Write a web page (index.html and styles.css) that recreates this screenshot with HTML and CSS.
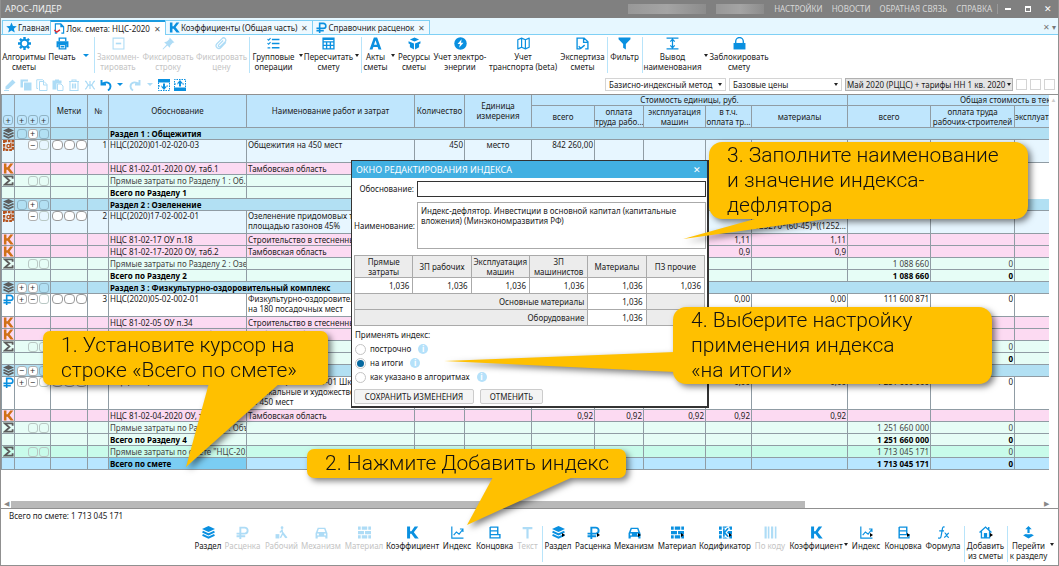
FILE: index.html
```
<!DOCTYPE html>
<html lang="ru">
<head>
<meta charset="utf-8">
<title>АРОС-ЛИДЕР</title>
<link rel="stylesheet" href="styles.css">
</head>
<body>
<svg class="defs" aria-hidden="true">
  <symbol id="star" viewBox="0 0 24 24"><path fill="currentColor" d="M12 1l3.200 7.600 8.200.7-6.200 5.400 1.900 8.100L12 18.500l-7.100 4.300 1.900-8.100L.6 9.300l8.200-.7z"/></symbol>
  <symbol id="doc" viewBox="0 0 24 24"><path fill="none" stroke="currentColor" stroke-width="2.500" d="M7 22H3V2h12l6 6v14h-5M15 2v6h6"/><path fill="none" stroke="#e0262c" stroke-width="3" d="M1 15l5 5 7-5"/></symbol>
  <symbol id="kk" viewBox="0 0 24 24"><path fill="currentColor" d="M2 1h5.500v8.500H10L16 1h6.500l-8 10.500 9 11.500h-7L10 14.500H7.500V23H2z"/></symbol>
  <symbol id="rub" viewBox="0 0 24 24"><path fill="none" stroke="currentColor" stroke-width="3.500" d="M8 24V3h8a5.500 5.500 0 0 1 0 11H1M1 19h16"/></symbol>
  <symbol id="gear" viewBox="0 0 24 24"><circle cx="12" cy="12" r="6.800" fill="none" stroke="currentColor" stroke-width="3.600"/><path stroke="currentColor" stroke-width="4.500" d="M12 0v4M12 20v4M0 12h4M20 12h4M3.600 3.600l2.800 2.800M17.600 17.600l2.800 2.800M20.400 3.600l-2.800 2.800M6.400 17.600l-2.800 2.800"/></symbol>
  <symbol id="print" viewBox="0 0 24 24"><path fill="none" stroke="currentColor" stroke-width="2.500" d="M6 8V2h12v6M6 14h12v8H6zM8.500 18h7"/><path fill="currentColor" d="M1 8h22v11h-4v-6H5v6H1z"/></symbol>
  <symbol id="minusbox" viewBox="0 0 24 24"><path fill="none" stroke="currentColor" stroke-width="2" d="M2 2h20v20H2z"/><path stroke="currentColor" stroke-width="3" d="M7 12h10"/></symbol>
  <symbol id="pin" viewBox="0 0 24 24"><path fill="currentColor" d="M14 1l9 9-3 .500-4.500 4.500-1 5-4.500-4.500L2 23l-1-1 7.500-8L4 9.500l5-1L13.500 4z"/></symbol>
  <symbol id="clip" viewBox="0 0 24 24"><path fill="none" stroke="currentColor" stroke-width="2.300" d="M20 10l-9 9.500a5 5 0 0 1-7.500-7L13 3a4 4 0 0 1 6 5.500l-9 9a2 2 0 0 1-3-3L15 6.500"/></symbol>
  <symbol id="list" viewBox="0 0 24 24"><path fill="none" stroke="currentColor" stroke-width="2.800" d="M9 4.500h14M9 12h14M9 20h14"/><path fill="none" stroke="currentColor" stroke-width="2" d="M1 4l2 2 3.500-4M1 11.500l2 2L6.500 9.500M1 20h5"/></symbol>
  <symbol id="calc" viewBox="0 0 24 24"><path fill="none" stroke="currentColor" stroke-width="2.500" d="M2 2h20v20H2zM2 9h20M2 15.500h20M8.500 9v13M15.500 9v13M2 4.500h20"/></symbol>
  <symbol id="aa" viewBox="0 0 24 24"><path fill="currentColor" fill-rule="evenodd" d="M9 1h6l8 22h-5.500l-1.500-4.500H8L6.500 23H1zM12 6l-2.700 8.500h5.400z"/></symbol>
  <symbol id="boxes" viewBox="0 0 24 24"><path fill="currentColor" d="M12 1l8.500 3.500L12 8.500 3.500 4.500zM1 8l10 4v11L3.500 19v-6L1 12zM23 8l-10 4v11l7.500-4v-6L23 12z"/></symbol>
  <symbol id="bolt" viewBox="0 0 24 24"><circle cx="12" cy="12" r="11.500" fill="currentColor"/><path fill="#fff" d="M14 4l-7.500 9H11l-1.500 7 8-9.500H13z"/></symbol>
  <symbol id="map" viewBox="0 0 24 24"><path fill="none" stroke="currentColor" stroke-width="2.200" stroke-linejoin="round" d="M1.500 5l7-3 7 3 7-3v17l-7 3-7-3-7 3zM8.500 2v17M15.500 5v17"/></symbol>
  <symbol id="exam" viewBox="0 0 24 24"><path fill="none" stroke="currentColor" stroke-width="2.500" d="M8 22H2V2h13l7 7v13h-5M14 2v8h8M5 17l4 4 7-6"/></symbol>
  <symbol id="funnel" viewBox="0 0 24 24"><path fill="currentColor" d="M1 1h22v3l-8.500 9v10l-5-3v-7L1 4z"/></symbol>
  <symbol id="height" viewBox="0 0 24 24"><path fill="none" stroke="currentColor" stroke-width="2.300" d="M1 2h22M1 22h22M12 4v16M8 8.500L12 4l4 4.500M8 15.500l4 4.500 4-4.500"/></symbol>
  <symbol id="lock" viewBox="0 0 24 24"><path fill="none" stroke="currentColor" stroke-width="2.500" d="M5 12V8a7 7 0 0 1 14 0v4"/><path fill="currentColor" d="M1 11h22v12H1z"/></symbol>
  <symbol id="pencil" viewBox="0 0 24 24"><path fill="currentColor" d="M17 1l6 6L9 20l-6 1 0-6zM0 22h10v2H0z"/></symbol>
  <symbol id="copyf" viewBox="0 0 24 24"><path fill="currentColor" d="M1 1h15v4H6v12H1z"/><path fill="currentColor" d="M8 7h15v16H8z"/></symbol>
  <symbol id="copy" viewBox="0 0 24 24"><path fill="none" stroke="currentColor" stroke-width="2" d="M4 19H1.500V1.500h12L16 4M7 5h9l6 6v12H7zM15 5v7h7"/></symbol>
  <symbol id="paste" viewBox="0 0 24 24"><path fill="currentColor" d="M1 3h5V1h8v2h5v6H9v12H1z"/><path fill="none" stroke="currentColor" stroke-width="2" d="M11 10h7l4 4v9H11z"/></symbol>
  <symbol id="trash" viewBox="0 0 24 24"><path fill="none" stroke="currentColor" stroke-width="2.200" d="M2 5h20M8 5V2h8v3M4 5v18h16V5M9 9v10M12 9v10M15 9v10"/></symbol>
  <symbol id="zhe" viewBox="0 0 24 24"><path fill="none" stroke="currentColor" stroke-width="2.500" d="M12 4v16M2 4c5 0 3 8 8 8h4c5 0 3-8 8-8M2 20c5 0 3-8 8-8h4c5 0 3 8 8 8"/></symbol>
  <symbol id="undo" viewBox="0 0 24 24"><path fill="none" stroke="currentColor" stroke-width="3.800" d="M3 2v9h9M4 10c8-6 17-3 17 5 0 3-2 6-5 8"/></symbol>
  <symbol id="gridd" viewBox="0 0 24 24"><path fill="currentColor" d="M0 0h24v7H0z"/><path fill="none" stroke="currentColor" stroke-width="2" stroke-dasharray="3 2" d="M1 7v16h22V7M1 14h6M17 14h6"/><path fill="currentColor" d="M10 9h4v6h4l-6 7-6-7h4z"/></symbol>
  <symbol id="gridu" viewBox="0 0 24 24"><path fill="currentColor" d="M0 17h24v7H0z"/><path fill="none" stroke="currentColor" stroke-width="2" stroke-dasharray="3 2" d="M1 17V1h22v16M1 10h6M17 10h6"/><path fill="currentColor" d="M10 15h4V9h4l-6-7-6 7h4z"/></symbol>
  <symbol id="layers" viewBox="0 0 24 24"><path fill="currentColor" d="M12 0l12 5.500L12 11 0 5.500z"/><path fill="none" stroke="currentColor" stroke-width="3.800" d="M1 10.500l11 5 11-5M1 16.500l11 5 11-5"/></symbol>
  <symbol id="worker" viewBox="0 0 24 24"><circle cx="13" cy="3" r="2.500" fill="currentColor"/><path fill="none" stroke="currentColor" stroke-width="2.500" d="M13 6l1 8-4 8M14 13l6 9M13 8l-4 4M12 9l10 13"/><path fill="currentColor" d="M1 15h7v8H1z"/></symbol>
  <symbol id="car" viewBox="0 0 24 24"><path fill="currentColor" fill-rule="evenodd" d="M5 3h14l3 8 1 2v10h-4v-3H5v3H1V13l1-2zM7 5.500L5 11h14l-2-5.500zM5.500 14a1.700 1.700 0 1 0 .1 0zM18.500 14a1.700 1.700 0 1 0 .1 0z"/></symbol>
  <symbol id="bricks" viewBox="0 0 24 24"><path fill="currentColor" d="M0 1h5v6H0zM7 1h10v6H7zM19 1h5v6h-5zM0 9h11v6H0zM13 9h11v6H13zM0 17h5v6H0zM7 17h10v6H7zM19 17h5v6h-5z"/></symbol>
  <symbol id="codif" viewBox="0 0 24 24"><use href="#bricks"/><path stroke="#fff" stroke-width="7" fill="none" d="M9 3v18M18 3l-8 9 8 9"/><path stroke="currentColor" stroke-width="3" fill="none" d="M9 4v16M17 4l-7 8 7 8"/></symbol>
  <symbol id="chart" viewBox="0 0 24 24"><path fill="none" stroke="currentColor" stroke-width="2.200" d="M1.500 1v21.500H23M5 17l5-6 5 4 7-9M16.500 5.500H22V11"/></symbol>
  <symbol id="ending" viewBox="0 0 24 24"><path fill="none" stroke="currentColor" stroke-width="2.600" d="M4 2h14v14M4 2v20h18v-6H4M4 9h14"/></symbol>
  <symbol id="tt" viewBox="0 0 24 24"><path fill="currentColor" d="M3 2h18v4h-7v17h-4V6H3z"/></symbol>
  <symbol id="bars" viewBox="0 0 24 24"><path fill="currentColor" d="M1 1h4v22H1zM7 1h3v22H7zM13 1h4v22h-4zM20 1h3v22h-3z"/></symbol>
  <symbol id="fx" viewBox="0 0 24 24"><path fill="none" stroke="currentColor" stroke-width="2.200" d="M14 2c-4-1.500-4 3-4.500 6L7.500 19c-.5 3-2 4-5.500 3M4 9h9M14 13c4-1 3 9 8 8M22 13c-3 0-5 8-9 8"/></symbol>
  <symbol id="house" viewBox="0 0 24 24"><path fill="none" stroke="currentColor" stroke-width="2.500" d="M1 12L12 2l11 10M4.500 10v12h15V10M18 2v5"/><path fill="currentColor" d="M9 13h6v9H9z"/></symbol>
  <symbol id="goto" viewBox="0 0 24 24"><path fill="currentColor" d="M12 0l6 6h-4v7h-4V6H6zM2 17l6-2.500V15h8v-.500L22 17l-10 6z"/></symbol>
  <symbol id="sigma" viewBox="0 0 24 24"><path fill="none" stroke="currentColor" stroke-width="4" d="M21 8V3H4l10 9-10 9h17v-5"/></symbol>
  <symbol id="norm" viewBox="0 0 24 24"><path fill="none" stroke="currentColor" stroke-width="5" stroke-dasharray="6 2" d="M2.500 2.500h19v19h-19z"/><circle cx="12" cy="13" r="3.500" fill="none" stroke="currentColor" stroke-width="3"/><path stroke="currentColor" stroke-width="3" d="M17 6v11"/></symbol>
</svg>

<div class="app">
  <header class="titlebar">
    <span class="brand">АРОС-ЛИДЕР</span>
    <span class="redacted"></span><span class="redacted short"></span>
    <nav class="menu"><a href="#">НАСТРОЙКИ</a><a href="#">НОВОСТИ</a><a href="#">ОБРАТНАЯ СВЯЗЬ</a><a href="#">СПРАВКА</a></nav>
    <button class="wbtn" aria-label="Свернуть"><i class="w-min"></i></button>
    <button class="wbtn" aria-label="Развернуть"><i class="w-max"></i></button>
    <button class="wbtn" aria-label="Закрыть">✕</button>
  </header>

  <nav class="tabs">
    <a class="tab" href="#"><svg class="ti"><use href="#star"/></svg>Главная</a>
    <a class="tab active" href="#"><svg class="ti"><use href="#doc"/></svg>Лок. смета: НЦС-2020<span class="x">✕</span></a>
    <a class="tab" href="#"><svg class="ti"><use href="#kk"/></svg>Коэффициенты (Общая часть)<span class="x">✕</span></a>
    <a class="tab" href="#"><svg class="ti"><use href="#rub"/></svg>Справочник расценок<span class="x">✕</span></a>
    <span class="tabs-end">✕ ▾</span>
  </nav>

  <div class="ribbon">
    <button class="tool"><svg><use href="#gear"/></svg>Алгоритмы<br>сметы</button>
    <button class="tool"><svg><use href="#print"/></svg>Печать</button>
    <button class="caret blue" aria-label="Варианты печати"></button>
    <button class="tool sep" disabled><svg><use href="#minusbox"/></svg>Закоммен-<br>тировать</button>
    <button class="tool" disabled><svg><use href="#pin"/></svg>Фиксировать<br>строку</button>
    <button class="tool" disabled><svg><use href="#clip"/></svg>Фиксировать<br>цену</button>
    <button class="tool sep"><svg><use href="#list"/></svg>Групповые<br>операции</button>
    <button class="caret" aria-label="Групповые операции: меню"></button>
    <button class="tool"><svg><use href="#calc"/></svg>Пересчитать<br>смету</button>
    <button class="caret" aria-label="Пересчитать: меню"></button>
    <button class="tool sep"><svg><use href="#aa"/></svg>Акты<br>сметы</button>
    <button class="caret" aria-label="Акты: меню"></button>
    <button class="tool"><svg><use href="#boxes"/></svg>Ресурсы<br>сметы</button>
    <button class="tool"><svg><use href="#bolt"/></svg>Учет электро-<br>энергии</button>
    <button class="tool"><svg><use href="#map"/></svg>Учет<br>транспорта (beta)</button>
    <button class="tool"><svg><use href="#exam"/></svg>Экспертиза<br>сметы</button>
    <button class="tool sep"><svg><use href="#funnel"/></svg>Фильтр</button>
    <button class="tool sep"><svg><use href="#height"/></svg>Вывод<br>наименования</button>
    <button class="caret" aria-label="Вывод: меню"></button>
    <button class="tool"><svg><use href="#lock"/></svg>Заблокировать<br>смету</button>
  </div>

  <div class="quick">
    <div class="qicons">
      <button disabled aria-label="Правка"><svg><use href="#pencil"/></svg></button>
      <button disabled aria-label="Копировать"><svg><use href="#copyf"/></svg></button>
      <button disabled aria-label="Дублировать"><svg><use href="#copy"/></svg></button>
      <button disabled aria-label="Вставить"><svg><use href="#paste"/></svg></button>
      <button disabled aria-label="Удалить"><svg><use href="#trash"/></svg></button>
      <button disabled aria-label="Ж"><svg><use href="#zhe"/></svg></button>
      <button aria-label="Отменить"><svg><use href="#undo"/></svg></button>
      <button class="caret blue" aria-label="История отмен"></button>
      <button disabled aria-label="Вернуть"><svg class="flip"><use href="#undo"/></svg></button>
      <button class="caret pale" aria-label="История возвратов"></button>
      <button aria-label="Развернуть"><svg><use href="#gridd"/></svg></button>
      <button aria-label="Свернуть"><svg><use href="#gridu"/></svg></button>
    </div>
    <div class="filters">
      <label class="sel"><select aria-label="Метод"><option>Базисно-индексный метод</option></select></label>
      <label class="sel"><select aria-label="Цены"><option>Базовые цены</option></select></label>
      <label class="sel grey"><select aria-label="Период"><option>Май 2020 (РЦЦС) + тарифы НН 1 кв. 2020</option></select></label>
      <button class="sq" aria-label="Опция 1"></button><button class="sq" aria-label="Опция 2"></button><button class="sq" aria-label="Опция 3"></button>
    </div>
  </div>

  <main class="gridarea">
    <div class="gridwrap">
    <table class="grid">
      <colgroup><col class="c-ico"><col class="c-box"><col class="c-mark"><col class="c-num"><col class="c-base"><col class="c-name"><col class="c-qty"><col class="c-unit"><col class="c-all"><col class="c-pay"><col class="c-mach"><col class="c-incl"><col class="c-mat"><col class="c-total"><col class="c-work"><col></colgroup>
      <thead>
        <tr class="g1"><th rowspan="2" class="low"><span class="bx"><button class="b">+</button></span></th><th rowspan="2" class="low"><span class="bx"><button class="b">+</button><button class="b">+</button><button class="b">+</button></span></th><th rowspan="2">Метки</th><th rowspan="2">№</th><th rowspan="2">Обоснование</th><th rowspan="2">Наименование работ и затрат</th><th rowspan="2">Количество</th><th rowspan="2">Единица<br>измерения</th><th colspan="5">Стоимость единицы, руб.</th><th colspan="3" class="cut">Общая стоимость в теку</th></tr>
        <tr class="g2"><th>всего</th><th>оплата<br>труда рабо...</th><th>эксплуатация<br>машин</th><th>в т.ч.<br>оплата тр...</th><th>материалы</th><th>всего</th><th>оплата труда<br>рабочих-строителей</th><th class="clip">эксплуата</th></tr>
      </thead>
      <tbody>
        <tr class="sec"><td><svg class="ri"><use href="#layers"/></svg><td><span class="bx"><i class="b e"></i><button class="b w">+</button><i class="b e"></i></span><td><td><td colspan="12">Раздел 1 : Общежития
        <tr class="nz h2"><td><svg class="ri br"><use href="#norm"/></svg><td><span class="bx"><i class="b n"></i><button class="b w">−</button><i class="b e"></i></span><td><span class="bx"><i class="b w r"></i><i class="b w r"></i><i class="b w r"></i></span><td class="r">1<td>НЦС(2020)01-02-020-03<td>Общежития на 450 мест<td class="r">450<td class="c">место<td class="r">842 260,00<td><td><td><td><td><td><td>
        <tr class="k"><td><svg class="ri or"><use href="#kk"/></svg><td><td><td><td>НЦС 81-02-01-2020 ОУ, таб.1<td>Тамбовская область<td><td><td><td><td><td><td><td><td>
        <tr class="s"><td><svg class="ri"><use href="#sigma"/></svg><td><span class="bx"><i class="b n"></i><i class="b e"></i><i class="b e"></i></span><td><td><td>Прямые затраты по Разделу 1 : Об...<td><td><td><td><td><td><td><td><td><td>
        <tr class="s t"><td><td><td><td><td>Всего по Разделу 1<td><td><td><td><td><td><td><td><td><td>
        <tr class="sec"><td><svg class="ri"><use href="#layers"/></svg><td><span class="bx"><i class="b e"></i><button class="b w">+</button><i class="b e"></i></span><td><td><td colspan="12">Раздел 2 : Озеленение
        <tr class="nz h2"><td><svg class="ri br"><use href="#norm"/></svg><td><span class="bx"><i class="b n"></i><button class="b w">−</button><i class="b e"></i></span><td><span class="bx"><i class="b w r"></i><i class="b w r"></i><i class="b w r"></i></span><td class="r">2<td>НЦС(2020)17-02-002-01<td>Озеленение придомовых тер<br>площадью газонов 45%<td><td><td><td><td><td><td class="r"><br>125270*(60-45)*((1252...<td class="r">1 088 660<td><td>
        <tr class="k"><td><svg class="ri or"><use href="#kk"/></svg><td><td><td><td>НЦС 81-02-17 ОУ п.18<td>Строительство в стесненных<td><td><td><td><td><td class="r">1,11<td class="r">1,11<td><td><td>
        <tr class="k"><td><svg class="ri or"><use href="#kk"/></svg><td><td><td><td>НЦС 81-02-17-2020 ОУ, таб.2<td>Тамбовская область<td><td><td><td><td><td class="r">0,9<td class="r">0,9<td><td><td>
        <tr class="s"><td><svg class="ri"><use href="#sigma"/></svg><td><span class="bx"><i class="b n"></i><i class="b e"></i><i class="b e"></i></span><td><td><td>Прямые затраты по Разделу 2 : Озе...<td><td><td><td><td><td><td><td><td class="r">1 088 660<td class="r">0<td>
        <tr class="s t"><td><td><td><td><td>Всего по Разделу 2<td><td><td><td><td><td><td><td><td class="r">1 088 660<td class="r">0<td>
        <tr class="sec"><td><svg class="ri"><use href="#layers"/></svg><td><span class="bx"><button class="b w">+</button><button class="b w">+</button><i class="b e"></i></span><td><td><td colspan="12">Раздел 3 : Физкультурно-оздоровительный комплекс
        <tr class="h2"><td><svg class="ri bl"><use href="#rub"/></svg><td><span class="bx"><button class="b w">+</button><button class="b w">−</button><i class="b e"></i></span><td><span class="bx"><i class="b w r"></i><i class="b w r"></i><i class="b w r"></i></span><td class="r">3<td>НЦС(2020)05-02-002-01<td>Физкультурно-оздоровитель<br>на 180 посадочных мест<td><td><td><td><td><td class="r">0,00<td class="r">0,00<td class="r">111 600 871<td class="r">0<td>
        <tr class="k"><td><svg class="ri or"><use href="#kk"/></svg><td><td><td><td>НЦС 81-02-05 ОУ п.34<td>Строительство в стесненных<td><td><td><td><td><td><td><td><td><td>
        <tr class="k"><td><svg class="ri or"><use href="#kk"/></svg><td><td><td><td>НЦС 81-02-05-2020 ОУ, таб.1<td>Тамбовская область<td><td><td><td><td><td><td><td><td><td>
        <tr class="s"><td><svg class="ri"><use href="#sigma"/></svg><td><span class="bx"><i class="b n"></i><i class="b e"></i><i class="b e"></i></span><td><td><td><td><td><td><td><td><td><td><td><td><td class="r">0<td>
        <tr class="s t"><td><td><td><td><td><td><td><td><td><td><td><td><td><td><td class="r">0<td>
        <tr class="sec"><td><svg class="ri"><use href="#layers"/></svg><td><span class="bx"><button class="b w">−</button><button class="b w">+</button><i class="b e"></i></span><td><td><td colspan="12">
        <tr class="h3"><td><svg class="ri bl"><use href="#rub"/></svg><td><span class="bx"><button class="b w">+</button><button class="b w">−</button><i class="b e"></i></span><td><span class="bx"><i class="b w r"></i><i class="b w r"></i><i class="b w r"></i></span><td class="r">4<td>НЦС(2020)03-04-001-01<td>НЦС(2020)03-04-001-01 Школ<br>музыкальные и художествен<br>на 450 мест<td><td><td><td><td><td class="r">0,00<td class="r">0,00<td class="r">1 251 660 000<td class="r">0<td>
        <tr class="k"><td><svg class="ri or"><use href="#kk"/></svg><td><td><td><td>НЦС 81-02-04-2020 ОУ, таб.1<td>Тамбовская область<td><td><td class="r">0,92<td class="r">0,92<td class="r">0,92<td class="r">0,92<td class="r">0,92<td><td><td>
        <tr class="s"><td><svg class="ri"><use href="#sigma"/></svg><td><span class="bx"><i class="b n"></i><i class="b e"></i><i class="b e"></i></span><td><td><td>Прямые затраты по Разделу 4 : Объ...<td><td><td><td><td><td><td><td><td class="r">1 251 660 000<td class="r">0<td>
        <tr class="s t"><td><td><td><td><td>Всего по Разделу 4<td><td><td><td><td><td><td><td><td class="r">1 251 660 000<td class="r">0<td>
        <tr class="s gr"><td><svg class="ri"><use href="#sigma"/></svg><td><span class="bx"><i class="b n"></i><i class="b e"></i><i class="b e"></i></span><td><td><td>Прямые затраты по смете "НЦС-20...<td><td><td><td><td><td><td><td><td class="r">1 713 045 171<td class="r">0<td>
        <tr class="s t cur"><td><td><td><td><td class="here">Всего по смете<td><td><td><td><td><td><td><td><td class="r">1 713 045 171<td class="r">0<td>
      </tbody>
    </table>
    <div class="vbar">▲</div>
    </div>
    <div class="hbar"><span>◀</span><i class="thumb"></i><span>▶</span></div>
  </main>

  <footer class="foot">
    <p class="status">Всего по смете: 1 713 045 171</p>
    <div class="dock">
      <button class="tool"><svg><use href="#layers"/></svg>Раздел</button>
      <button class="tool" disabled><svg><use href="#rub"/></svg>Расценка</button>
      <button class="tool" disabled><svg><use href="#worker"/></svg>Рабочий</button>
      <button class="tool" disabled><svg><use href="#car"/></svg>Механизм</button>
      <button class="tool" disabled><svg><use href="#bricks"/></svg>Материал</button>
      <button class="tool"><svg><use href="#kk"/></svg>Коэффициент</button>
      <button class="tool"><svg><use href="#chart"/></svg>Индекс</button>
      <button class="tool"><svg><use href="#ending"/></svg>Концовка</button>
      <button class="tool" disabled><svg><use href="#tt"/></svg>Текст</button>
      <button class="tool sep more"><svg><use href="#layers"/></svg>Раздел</button>
      <button class="tool more"><svg><use href="#rub"/></svg>Расценка</button>
      <button class="tool more"><svg><use href="#car"/></svg>Механизм</button>
      <button class="tool more"><svg><use href="#bricks"/></svg>Материал</button>
      <button class="tool more"><svg><use href="#codif"/></svg>Кодификатор</button>
      <button class="tool" disabled><svg><use href="#bars"/></svg>По коду</button>
      <button class="tool"><svg><use href="#kk"/></svg>Коэффициент</button>
      <button class="caret" aria-label="Коэффициент: меню"></button>
      <button class="tool more"><svg><use href="#chart"/></svg>Индекс</button>
      <button class="tool more"><svg><use href="#ending"/></svg>Концовка</button>
      <button class="tool"><svg><use href="#fx"/></svg>Формула</button>
      <button class="tool sep more"><svg><use href="#house"/></svg>Добавить<br>из сметы</button>
      <button class="tool sep"><svg><use href="#goto"/></svg>Перейти<br>к разделу</button>
      <button class="caret" aria-label="Перейти: меню"></button>
    </div>
  </footer>
</div>

<section class="dialog" role="dialog" aria-label="Окно редактирования индекса">
  <div class="dhead"><span>ОКНО РЕДАКТИРОВАНИЯ ИНДЕКСА</span><button class="dclose" aria-label="Закрыть окно">✕</button></div>
  <div class="dform">
    <label for="base">Обоснование:</label><input id="base" type="text">
    <label for="name">Наименование:</label><textarea id="name">Индекс-дефлятор. Инвестиции в основной капитал (капитальные вложения) (Минэкономразвития РФ)</textarea>
  </div>
  <table class="dtab">
    <tr><th>Прямые<br>затраты<th>ЗП рабочих<th>Эксплуатация<br>машин<th>ЗП<br>машинистов<th>Материалы<th>ПЗ прочие
    <tr><td>1,036<td>1,036<td>1,036<td>1,036<td>1,036<td>1,036
    <tr><td colspan="4" class="off">Основные материалы<td>1,036<td class="off">
    <tr><td colspan="4" class="off">Оборудование<td>1,036<td class="off">
  </table>
  <fieldset class="apply">
    <legend>Применять индекс:</legend>
    <label><input type="radio" name="ap">построчно<i class="info">i</i></label>
    <label><input type="radio" name="ap" checked>на итоги<i class="info">i</i></label>
    <label><input type="radio" name="ap">как указано в алгоритмах<i class="info">i</i></label>
  </fieldset>
  <div class="dbtns"><button>СОХРАНИТЬ ИЗМЕНЕНИЯ</button><button>ОТМЕНИТЬ</button></div>
</section>

<aside class="note n1"><svg class="tail" viewBox="0 0 100 84"><path d="M23 0h71L0 84z"/></svg><p>1. Установите курсор на<br>строке «Всего по смете»</p></aside>
<aside class="note n2"><svg class="tail" viewBox="0 0 110 48"><path d="M26 0h80L0 48z"/></svg><p>2. Нажмите Добавить индекс</p></aside>
<aside class="note big n3"><svg class="tail" viewBox="0 0 160 22"><path d="M79 0h79L0 22z"/></svg><p>3. Заполните наименование<br>и значение индекса-<br>дефлятора</p></aside>
<aside class="note big n4"><svg class="tail" viewBox="0 0 231 20"><path d="M231 0v20L0 9z"/></svg><p>4. Выберите настройку<br>применения индекса<br>«на итоги»</p></aside>
</body>
</html>
```
FILE: styles.css
```
* { box-sizing: border-box; }
body { margin: 0; font: 8px/10px "Noto Sans", "Open Sans", sans-serif; color: #222; background: #fff; overflow: hidden; }
button, input, select, textarea { font: inherit; color: inherit; margin: 0; padding: 0; border: 0; background: none; }
p { margin: 0; }
a { color: inherit; text-decoration: none; }
.defs { display: none; }

.app { display: flex; flex-direction: column; height: 100vh; border: 1px solid #909090; border-top: 0; }

.titlebar { display: flex; align-items: center; height: 18px; background: #808080; color: #d8d8d8; padding: 0 0 0 4px; }
.brand { font-size: 9px; flex: 1; color: #f0f0f0; }
.redacted { width: 78px; height: 10px; margin-right: 10px; background: linear-gradient(90deg, #989898, #a4a4a4 50%, #8c8c8c); }
.redacted.short { width: 48px; }
.menu { display: flex; gap: 9px; padding-right: 5px; border-right: 1px solid #999; }
.wbtn { width: 20px; height: 12px; display: grid; place-items: center; color: #fff; font-size: 9px; }
.w-min { width: 6px; height: 2px; background: #fff; }
.w-max { width: 6px; height: 6px; border: 1px solid #fff; border-top-width: 2px; }

.tabs { display: flex; align-items: flex-end; height: 17px; background: #e6f7ff; border-bottom: 1px solid #7fd0f5; padding-left: 1px; }
.tab { display: flex; align-items: center; gap: 1px; height: 14px; padding: 0 1px 0 3px; border: 1px solid #7fd0f5; border-bottom: 0; margin-right: -1px; background: #eef9ff; white-space: nowrap; }
.tab.active { background: #fff; height: 15px; margin-bottom: -1px; border-top: 2px solid #1a9be0; }
.ti { width: 11px; height: 11px; color: #0a90e0; flex: none; }
.x { padding: 0 3px; font-size: 8px; color: #555; }
.tabs-end { margin-left: auto; padding: 0 2px 2px 0; color: #777; }

.tool { display: flex; flex-direction: column; align-items: center; white-space: nowrap; text-align: center; color: #222; position: relative; }
.tool svg { width: 13px; height: 13px; color: #0a90e0; flex: none; margin-bottom: 2px; }
.tool:disabled { color: #c4c4c4; }
.tool:disabled svg { color: #aedcf6; }
.sep::before { content: ""; position: absolute; left: 0; top: 0; bottom: 0; width: 1px; background: #b8e4fa; }
.caret { display: grid; place-items: center; height: 14px; }
.caret::after { content: ""; border: 2px solid transparent; border-top: 3px solid #222; border-bottom: 0; }
.caret.blue::after { border-width: 3px 3px 0; border-top-color: #0a90e0; }
.caret.pale::after { border-width: 3px 3px 0; border-top-color: #aedcf6; }

.ribbon { display: grid; grid-template-columns: 46px 30px 17px 48px 52px 55px 49px 6px 49px 8px 29px 6px 36px 56px 70px 49px 35px 61px 5px 62px; height: 38px; margin-top: 2px; }
.ribbon .tool { justify-content: flex-start; height: 36px; }
.ribbon .caret { margin-top: 11px; }

.quick { display: flex; justify-content: space-between; align-items: center; height: 19px; padding: 0 3px 0 1px; }
.qicons { display: grid; grid-template-columns: repeat(7, 16px) 12px 18px 12px 16px 16px; align-items: center; }
.qicons button { display: grid; place-items: center; color: #0a90e0; }
.qicons button:disabled { color: #aedcf6; }
.qicons svg { width: 12px; height: 12px; }
.flip { transform: scaleX(-1); }
.filters { display: flex; gap: 3px; align-items: center; }
.sel { position: relative; width: 121px; }
.sel:nth-child(2) { width: 113px; }
.sel.grey { width: 168px; }
.sel select { appearance: none; width: 100%; height: 13px; padding: 0 3px; border: 1px solid #d4d4d4; background: #fff; }
.sel.grey select { background: #e4e4e4; border-color: #b0b0b0; padding: 0 1px; }
.sel::after { content: ""; position: absolute; right: 4px; top: 5px; border: 2px solid transparent; border-top: 3px solid #222; border-bottom: 0; pointer-events: none; }
.sel.grey::after { right: 2px; }
.sq { width: 11px; height: 11px; border: 1px solid #d4d4d4; }

.gridarea { flex: 1; min-height: 0; display: flex; flex-direction: column; border-top: 1px solid #909090; border-bottom: 1px solid #909090; }
.gridwrap { flex: 1; min-height: 0; display: flex; overflow: hidden; }
.vbar { width: 9px; color: #ccc; text-align: center; font-size: 6px; }
.hbar { display: flex; align-items: center; justify-content: space-between; height: 8px; padding: 0 9px 0 3px; font-size: 7px; line-height: 8px; color: #888; gap: 2px; }
.thumb { width: 76%; height: 7px; background: #b9b9b9; margin-right: auto; }

.grid { flex: 1; width: 0; align-self: flex-start; table-layout: fixed; border-collapse: separate; border-spacing: 0; border-left: 1px solid #8c9aa2; }
.c-ico { width: 13px; } .c-box { width: 36px; } .c-mark { width: 37px; } .c-num { width: 21px; } .c-base { width: 138px; } .c-name { width: 168px; } .c-qty { width: 50px; } .c-unit { width: 67px; } .c-all { width: 63px; } .c-pay { width: 49px; } .c-mach { width: 62px; } .c-incl { width: 46px; } .c-mat { width: 96px; } .c-total { width: 83px; } .c-work { width: 84px; }
.grid th, .grid td { padding: 0 1px; border-right: 1px solid #909ca4; border-bottom: 1px solid #909ca4; overflow: hidden; white-space: nowrap; font-weight: 400; text-align: left; height: 12px; }
.grid th { background: #bfe6fd; text-align: center; padding: 0; }
.grid td:first-child { padding: 0; }
.grid th.cut { padding-left: 112px; text-align: left; border-right: 0; }
.grid th.clip { text-align: left; }
.grid .g1 th { height: 11px; }
.grid .g2 th { height: 22px; }
.grid th.low { vertical-align: bottom; padding-bottom: 2px; }
.grid tr > :last-child { border-right: 0; }
.grid td.r { text-align: right; }
.grid td.c { text-align: center; }
.grid .h2 td { height: 23px; vertical-align: top; }
.grid .h3 td { height: 33px; vertical-align: top; }
.sec { background: #b2e0f3; }
.sec td { font-weight: 700; color: #000; }
.nz { background: #e7f6ff; }
.k { background: #fcdaf2; }
.s { background: #e6fdf6; }
.s td { color: #444; }
.t td { font-weight: 700; color: #000; }
.gr { background: #c8fbea; }
.cur { background: #b8e6ff; }
.cur .here { background: #7bcdf3; }
.ri { display: block; width: 11px; height: 11px; margin: 0 auto; color: #5c5c5c; }
.br { color: #b5531f; } .or { color: #d07018; } .bl { color: #0a90e0; }
.bx { display: flex; gap: 1px; justify-content: center; }
.b { display: block; flex: none; width: 10px; height: 10px; border: 1px solid #8fb3c4; border-radius: 3px; text-align: center; font: 9px/7px "Noto Sans", sans-serif; color: #333; }
.b.w { background: #fff; border-color: #b0b0b0; }
.b.r { width: 11px; border-radius: 4px; border-color: #999; }
.b.n { visibility: hidden; }
.s .b, .nz .b.e, .h2 .b.e, .h3 .b.e { border-color: #b9c8c4; }

.foot { height: 56px; padding-top: 2px; }
.status { padding-left: 8px; }
.dock { display: grid; justify-content: end; grid-template-columns: 30px 39px 39px 40px 46px 51px 38px 37px 29px 32px 38px 44px 42px 54px 36px 56px 4px 36px 38px 42px 43px 43px 4px; padding: 5px 4px 0 0; }
.dock .tool { height: 36px; justify-content: flex-start; }
.dock .caret { margin-top: 11px; }
.more::after { content: ""; position: absolute; left: calc(50% + 4px); top: 7px; border: 2px solid transparent; border-left: 3px solid #000; border-right: 0; }

.dialog { position: absolute; left: 351px; top: 160px; width: 358px; border: 1px solid #333; border-right-width: 2px; border-bottom-width: 2px; background: #fff; }
.dhead { display: flex; justify-content: space-between; align-items: center; height: 17px; padding: 0 4px; background: #42b0e2; color: #fff; font-size: 9px; }
.dclose { width: 12px; }
.dform { display: grid; grid-template-columns: 60px 1fr; align-items: center; gap: 5px 3px; padding: 3px 1px 6px 2px; }
.dform label { text-align: right; }
.dform input { height: 16px; border: 1px solid #333; }
.dform textarea { height: 47px; border: 1px solid #aaa; padding: 3px; resize: none; }
.dtab { width: calc(100% - 4px); margin: 0 2px; table-layout: fixed; border-collapse: collapse; }
.dtab th, .dtab td { border: 1px solid #aaa; font-weight: 400; padding: 0 3px; text-align: right; height: 16px; }
.dtab th { background: #ececec; text-align: center; padding: 0; height: 22px; }
.dtab .off { background: #ececec; }
.apply { border: 0; margin: 0; padding: 4px 3px 0; }
.apply legend { padding: 0; float: left; width: 100%; height: 12px; }
.apply label { display: flex; align-items: center; clear: both; height: 14px; width: max-content; }
.apply input { appearance: none; width: 11px; height: 11px; margin-right: 4px; border: 1px solid #c4c4c4; border-radius: 50%; display: grid; place-items: center; }
.apply input:checked::after { content: ""; width: 7px; height: 7px; border-radius: 50%; background: #0669a0; }
.info { width: 10px; height: 10px; margin-left: 7px; border-radius: 50%; background: #b5e1fa; color: #fff; font: 700 8px/10px "Noto Sans", sans-serif; text-align: center; }
.dbtns { display: flex; gap: 6px; padding: 5px 2px 2px; }
.dbtns button { height: 15px; width: 120px; border: 1px solid #ccc; border-radius: 2px; background: #f4f4f4; font-size: 8px; }
.dbtns button + button { width: 63px; }

.note { position: absolute; width: 319px; border-radius: 7px; background: #ffc000; color: #111; font: 300 21px/25px Roboto, sans-serif; padding: 2px 18px; filter: drop-shadow(3px 3px 3px rgba(0, 0, 0, .5)); white-space: nowrap; }
.note.big { border-radius: 13px; padding: 1px 18px; }
.tail { position: absolute; fill: #ffc000; }
.n1 { left: 43px; top: 331px; width: 285px; }
.n1 .tail { left: 143px; top: 52px; width: 100px; height: 84px; }
.n2 { left: 307px; top: 449px; }
.n2 .tail { left: 160px; top: 28px; width: 110px; height: 48px; }
.n3 { left: 709px; top: 142px; }
.n3 .tail { left: -26px; top: 75px; width: 160px; height: 22px; }
.n4 { left: 673px; top: 307px; }
.n4 .tail { left: -229px; top: 45px; width: 231px; height: 20px; }
```
